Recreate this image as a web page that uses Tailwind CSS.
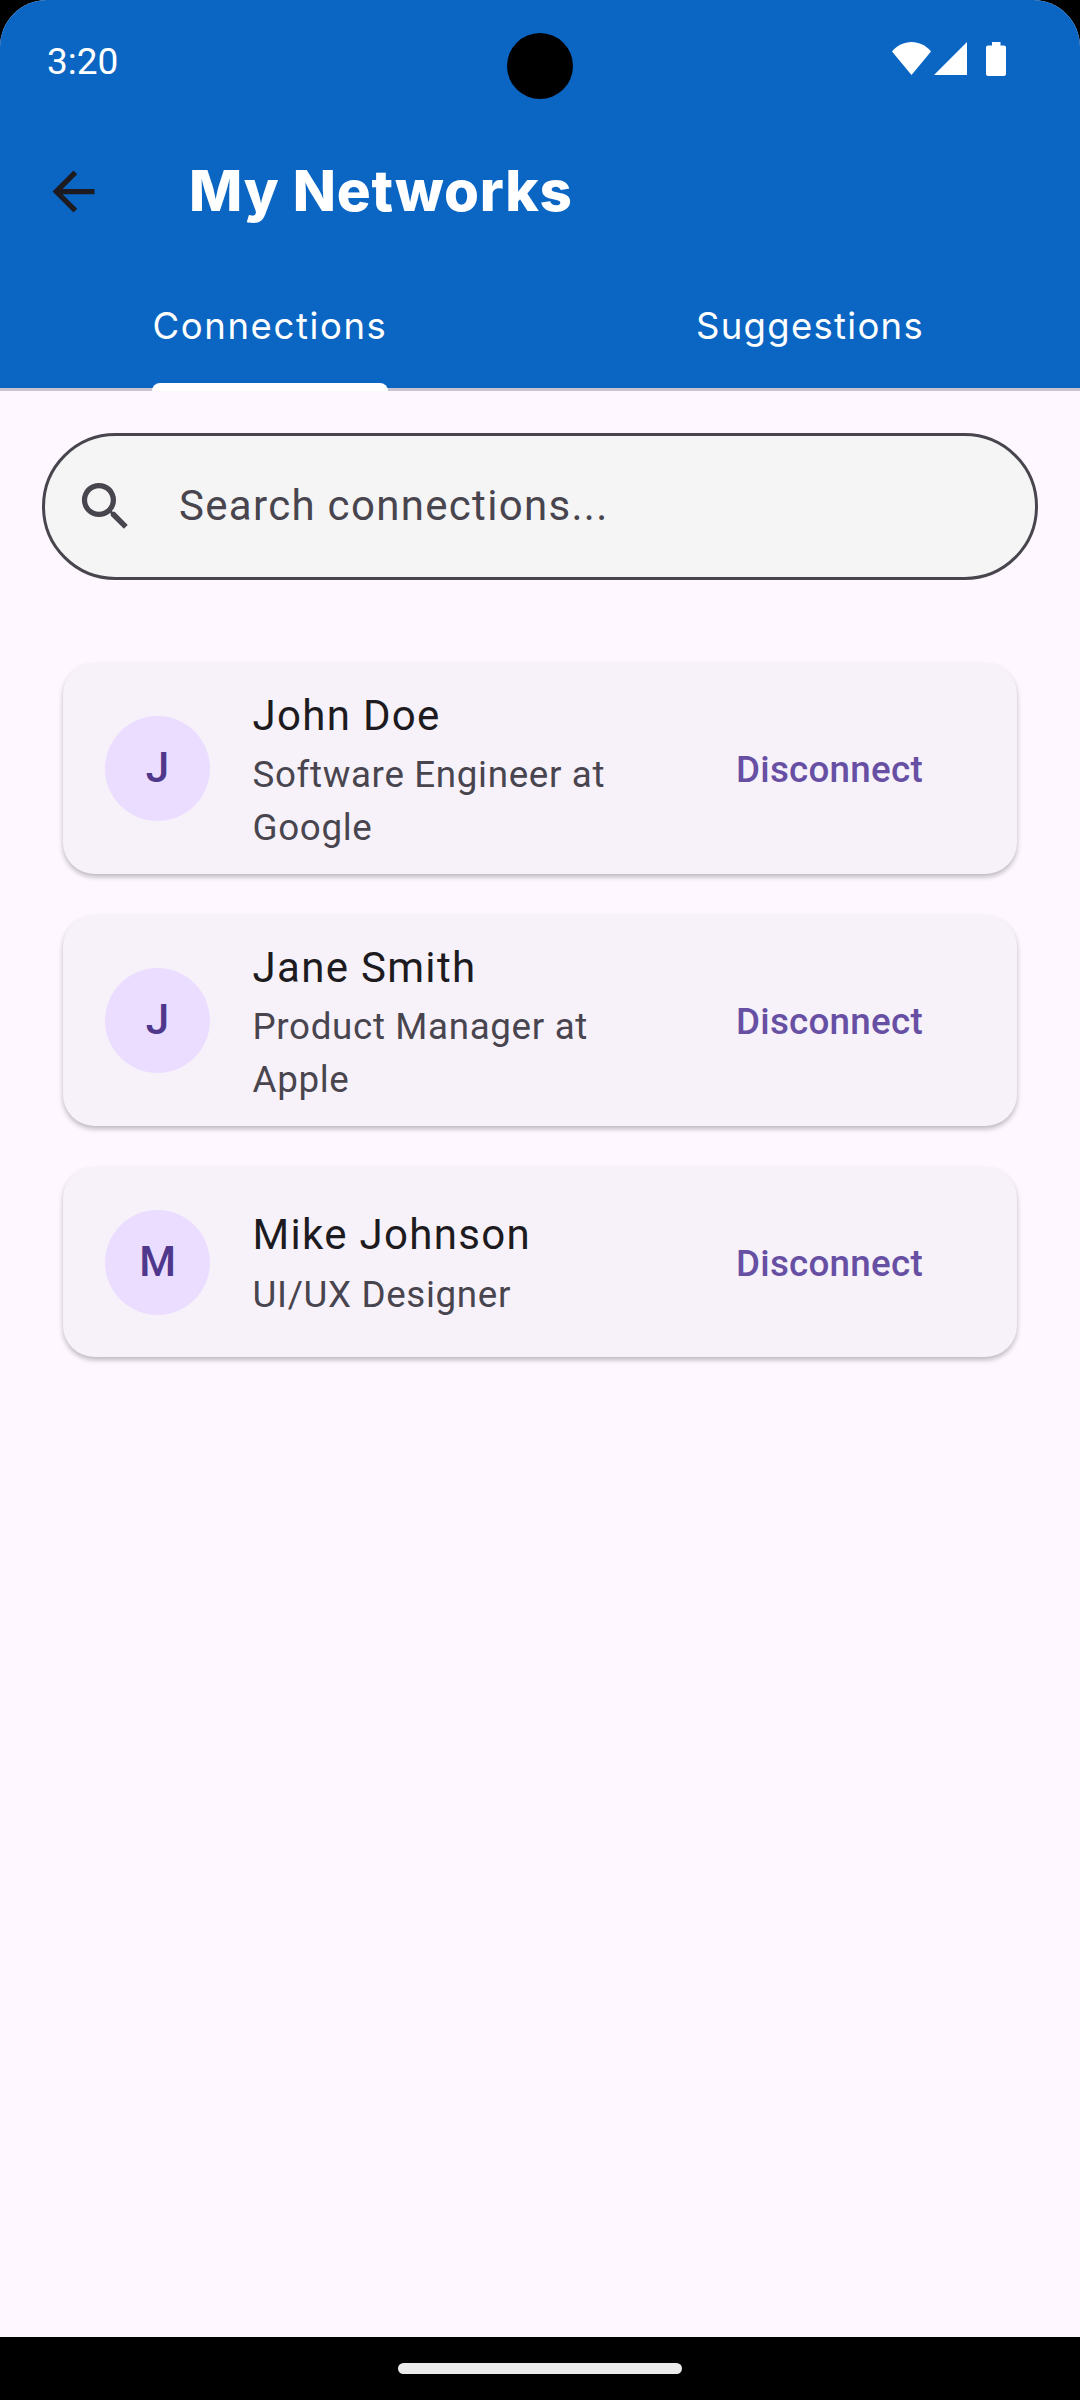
<!DOCTYPE html>
<html lang="en">
<head>
<meta charset="utf-8">
<title>My Networks</title>
<script src="https://cdn.jsdelivr.net/npm/@tailwindcss/browser@4"></script>
</head>
<body class="bg-black">
<div class="flex h-[2400px] w-[1080px] flex-col overflow-hidden bg-black font-['Roboto',sans-serif]">
  <div class="relative flex flex-1 flex-col overflow-hidden rounded-t-[47px] bg-[#fef7ff]">
    <div class="absolute top-[33px] left-[507px] size-[66px] rounded-full bg-black"></div>
    <header class="flex h-[391px] flex-col border-b-3 border-[#cac4d0] bg-[#0b66c3] text-white">
      <div class="flex h-[118px] items-center justify-between pr-[74px] pl-[47px]">
        <span class="pt-[4px] text-[37px] leading-none">3:20</span>
        <svg class="h-[34px] w-[114px]" viewBox="0 0 114 34" fill="currentColor">
          <path d="M0 9.500C5 3.500 12 0 19.500 0S34 3.500 39 9.500L19.500 33Z"/>
          <path d="M75 0V33H42Z"/>
          <path d="M100 0h8.500v3.500h3.500a2 2 0 0 1 2 2v26.500a2 2 0 0 1-2 2H96a2 2 0 0 1-2-2V5.500a2 2 0 0 1 2-2h4z"/>
        </svg>
      </div>
      <div class="flex h-[147px] items-center pl-[42px]">
        <svg class="size-[63px] text-[#1d1b20]" viewBox="0 0 24 24" fill="currentColor"><path d="M20 11H7.830l5.590-5.590L12 4l-8 8 8 8 1.410-1.410L7.830 13H20v-2z"/></svg>
        <h1 class="ml-[84px] pb-px font-['Inter',sans-serif] text-[56.5px] leading-none font-extrabold tracking-[0.8px]">My Networks</h1>
      </div>
      <nav class="grid flex-1 grid-cols-2 font-['Inter',sans-serif] text-[36.5px] leading-none">
        <div class="relative flex items-center justify-center pb-px">
          <span class="tracking-[1.6px]">Connections</span>
          <div class="absolute -bottom-[3px] left-[152px] h-[8px] w-[236px] rounded-t-[8px] bg-white"></div>
        </div>
        <div class="flex items-center justify-center pb-px"><span class="tracking-[1.3px]">Suggestions</span></div>
      </nav>
    </header>
    <div class="mx-[42px] mt-[42px] flex h-[147px] items-center rounded-full border-3 border-[#49454f] bg-[#f5f5f5] pl-[29px] text-[#49454f]">
      <svg class="size-[63px]" viewBox="0 0 24 24" fill="currentColor"><path d="M15.500 14h-.79l-.28-.27A6.471 6.471 0 0 0 16 9.500 6.500 6.500 0 1 0 9.500 16c1.610 0 3.090-.59 4.230-1.570l.27.28v.79l5 4.990L20.490 19l-4.990-5zm-6 0C7.010 14 5 11.990 5 9.500S7.010 5 9.500 5 14 7.010 14 9.500 11.990 14 9.500 14z"/></svg>
      <span class="ml-[42px] pb-[2px] text-[42px] leading-none tracking-[1.3125px]">Search connections...</span>
    </div>
    <main class="mx-[63px] mt-[83px] flex flex-col gap-[41px]">
      <article class="flex h-[211px] items-center rounded-[31.5px] bg-[#f7f2fa] pl-[42px] shadow-[0_3px_5px_rgba(0,0,0,0.26)]">
        <div class="flex size-[105px] items-center justify-center rounded-full bg-[#eaddff] pb-[3px] text-[42px] font-medium text-[#4f378b]">J</div>
        <div class="mt-[21px] ml-[42.5px] w-[402px] self-start">
          <h2 class="mb-[2px] text-[42px] leading-[63px] tracking-[1.3125px] text-[#1d1b20]">John Doe</h2>
          <p class="text-[36.75px] leading-[52.5px] tracking-[0.656px] text-[#49454f]">Software Engineer at<br>Google</p>
        </div>
        <button class="ml-[81.5px] pt-[3px] text-[36.75px] font-medium tracking-[0.2625px] text-[#6750a4]">Disconnect</button>
      </article>
      <article class="flex h-[211px] items-center rounded-[31.5px] bg-[#f7f2fa] pl-[42px] shadow-[0_3px_5px_rgba(0,0,0,0.26)]">
        <div class="flex size-[105px] items-center justify-center rounded-full bg-[#eaddff] pb-[3px] text-[42px] font-medium text-[#4f378b]">J</div>
        <div class="mt-[21px] ml-[42.5px] w-[402px] self-start">
          <h2 class="mb-[2px] text-[42px] leading-[63px] tracking-[1.3125px] text-[#1d1b20]">Jane Smith</h2>
          <p class="text-[36.75px] leading-[52.5px] tracking-[0.656px] text-[#49454f]">Product Manager at<br>Apple</p>
        </div>
        <button class="ml-[81.5px] pt-[3px] text-[36.75px] font-medium tracking-[0.2625px] text-[#6750a4]">Disconnect</button>
      </article>
      <article class="flex h-[190px] items-center rounded-[31.5px] bg-[#f7f2fa] pl-[42px] shadow-[0_3px_5px_rgba(0,0,0,0.26)]">
        <div class="flex size-[105px] items-center justify-center rounded-full bg-[#eaddff] pb-[2px] text-[42px] font-medium text-[#4f378b]">M</div>
        <div class="mt-[36px] ml-[42.5px] w-[402px] self-start">
          <h2 class="mb-[3px] text-[42px] leading-[63px] tracking-[1.3125px] text-[#1d1b20]">Mike Johnson</h2>
          <p class="text-[36.75px] leading-[52.5px] tracking-[0.656px] text-[#49454f]">UI/UX Designer</p>
        </div>
        <button class="ml-[81.5px] pt-[3px] text-[36.75px] font-medium tracking-[0.2625px] text-[#6750a4]">Disconnect</button>
      </article>
    </main>
  </div>
  <footer class="flex h-[63px] items-center justify-center bg-black">
    <div class="h-[11px] w-[284px] rounded-full bg-[#ebebeb]"></div>
  </footer>
</div>
</body>
</html>
